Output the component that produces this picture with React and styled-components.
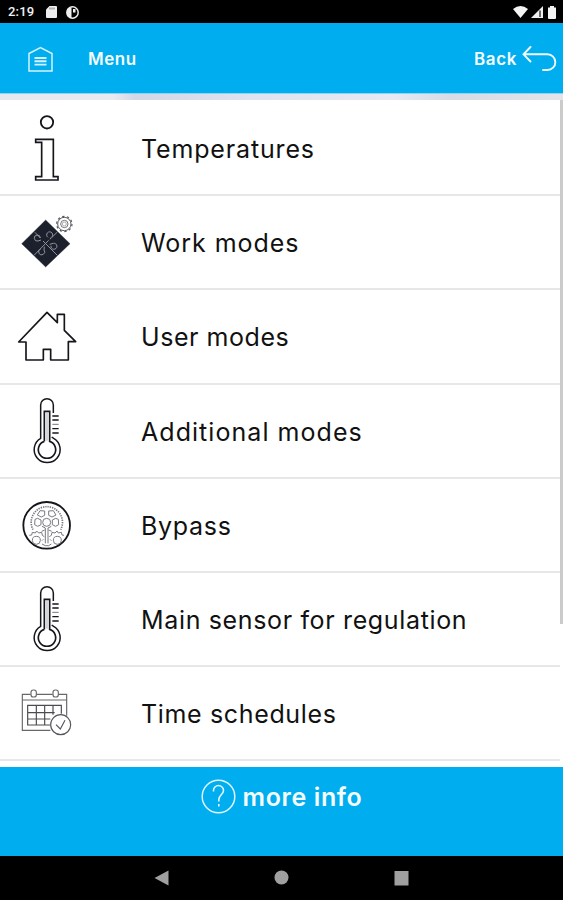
import styled, { createGlobalStyle } from 'styled-components';

const GlobalStyle = createGlobalStyle`
  * {
    box-sizing: border-box;
  }
  body {
    margin: 0;
    background: #000;
    overflow: hidden;
  }
`;

const Screen = styled.div`
  display: flex;
  flex-direction: column;
  width: 563px;
  height: 900px;
  background: #fff;
  font-family: Inter, 'Open Sans', sans-serif;
`;

const StatusBar = styled.div`
  display: flex;
  align-items: center;
  justify-content: space-between;
  height: 23px;
  padding: 1px 5px 0 8px;
  background: #000;
  color: #f2f2f2;
  font: 500 13px/22px Roboto, sans-serif;
`;

const StatusGroup = styled.div`
  display: flex;
  align-items: center;
  gap: ${(p) => p.$gap};
`;

const Time = styled.span`
  width: 26px;
  margin-right: 3px;
  letter-spacing: 0.2px;
`;

const Header = styled.header`
  display: flex;
  align-items: center;
  height: 70px;
  padding: 2px 6px 0 28px;
  background: #00adef;
  color: #f4fcff;
`;

const HeaderLabel = styled.span`
  font-size: 17px;
  font-weight: 600;
  line-height: 24px;
  letter-spacing: ${(p) => p.$tracking};
`;

const Title = styled(HeaderLabel)`
  margin-left: 35px;
  flex: 1;
`;

const BackButton = styled.div`
  display: flex;
  align-items: center;
  gap: 5px;
`;

const Shade = styled.div`
  height: 7px;
  border-top: 1px solid #8fd3ef;
  background: linear-gradient(90deg, #e6e8ef 0%, #e9eaf1 20%, #d3d7e6 24%, #dfe3ef 45%, #e6e9f3 70%, #d7dbe5 80%, #e2e4e9 100%);
`;

const Content = styled.main`
  display: flex;
  height: 667px;
  overflow: hidden;
`;

const List = styled.div`
  flex: 1;
  padding-top: 2px;
`;

const Scrollbar = styled.div`
  width: 3px;
  height: 524px;
  background: #cbcbcb;
`;

const Row = styled.div`
  display: flex;
  align-items: center;
  height: 94.2px;
  border-bottom: 2px solid #e7e7e8;
`;

const RowIcon = styled.svg`
  flex: none;
  width: 94px;
  height: 94px;
  margin-right: 47px;
  fill: none;
  stroke: #15161c;
  stroke-width: 4;
`;

const RowLabel = styled.span`
  padding-top: 2px;
  color: #111;
  font-size: 25px;
  line-height: 32px;
  white-space: nowrap;
  letter-spacing: ${(p) => p.$tracking};
`;

const Footer = styled.footer`
  display: flex;
  align-items: flex-start;
  justify-content: center;
  gap: 7px;
  height: 89px;
  padding-top: 12px;
  background: #00adef;
  color: #f4fcff;
`;

const FooterLabel = styled.span`
  font-size: 25px;
  font-weight: 600;
  line-height: 37px;
  letter-spacing: 0.6px;
`;

const NavBar = styled.nav`
  display: flex;
  align-items: center;
  justify-content: center;
  gap: 104px;
  height: 44px;
  background: #000;
`;

function InfoIcon() {
  return (
    <RowIcon viewBox="0 2 282 282">
      <circle cx="141" cy="66" r="18.5" strokeWidth="5.5" />
      <path d="M107 117H160V229H174V239H107V229H125V126H107Z" strokeWidth="5" />
    </RowIcon>
  );
}

function PuzzleIcon() {
  return (
    <RowIcon viewBox="0 1 282 282">
      <path d="M137 76L210 147L137 217L65 147Z" fill="#1c202c" stroke="#1c202c" strokeWidth="1" />
      <g stroke="#989ba3" strokeWidth="2.8">
        <path d="M105 113L121 130M129 139L172 182M172 112L155 129M146 137L102 182" />
        <path d="M121 130a9 9 0 1 0-7 9l9-3M144 128a9 9 0 1 1 10 0l-4 6M153 153a9 9 0 1 0 7-7l-11 3M122 163a9 9 0 1 0 10 3l1-10" />
      </g>
      <g stroke="#555861" strokeWidth="3">
        <circle cx="193" cy="88" r="20" />
        <circle cx="193" cy="88" r="23" strokeWidth="3.5" strokeDasharray="7 7.45" />
        <circle cx="193" cy="88" r="11" stroke="#777" />
        <circle cx="193" cy="88" r="6" stroke="#888" strokeWidth="2" />
      </g>
    </RowIcon>
  );
}

function HouseIcon() {
  return (
    <RowIcon viewBox="0 -3 282 282">
      <path
        d="M141 67L172 98V73H193V121L227 155H205V210H152V178H130V210H78V156H56Z"
        strokeWidth="5"
        strokeLinejoin="round"
      />
    </RowIcon>
  );
}

function ThermometerIcon() {
  return (
    <RowIcon viewBox="0 -4 282 282">
      <path d="M160 83V59a19 19 0 0 0-38 0V159A39 39 0 1 0 161 159L155 155" strokeWidth="4.5" />
      <path d="M133 168V78H149V168A26 26 0 1 1 133 168" strokeWidth="5" />
      <path d="M141 80V166" stroke="#aaacb8" strokeWidth="3" />
      <path d="M157 92H176M157 104H176M157 130H176M157 143H176" strokeWidth="4" />
      <path d="M157 117H176" stroke="#777" strokeWidth="3" />
    </RowIcon>
  );
}

function BypassIcon() {
  return (
    <RowIcon viewBox="0 -8 282 282">
      <circle cx="140" cy="134" r="70" strokeWidth="5.5" />
      <g stroke="#777a80" strokeWidth="3">
        <path d="M99 147A47 47 0 1 1 182 147" strokeWidth="5" strokeDasharray="4 3" />
        <circle cx="140" cy="125" r="12" />
        <path d="M120 90L112 103L124 109L134 104V91ZM146 91V104L156 109L168 103L160 90Z" />
        <path d="M105 116L113 113L123 118V132L113 137L104 132ZM175 116L167 113L157 118V132L167 137L176 132Z" />
        <path d="M126 137L136 142V188M154 137L144 142V188M125 152L134 148M155 152L146 148" />
        <circle cx="109" cy="179" r="12" />
        <circle cx="172" cy="179" r="12" />
        <path d="M88 164L95 163L97 155L106 157L110 151L116 157L125 155L127 164L133 168M192 164L186 163L184 155L175 157L171 151L165 157L156 155L154 164L148 168" />
        <path d="M126 180L130 176M150 176L154 180M126 190L136 195H146L154 190" />
      </g>
    </RowIcon>
  );
}

function CalendarIcon() {
  return (
    <RowIcon viewBox="0 -10 282 282">
      <g stroke="#66686d" strokeWidth="3.5">
        <path d="M92 75H67V183H151M109 75H158M175 75H200V139M67 92H200" />
        <rect x="93" y="62" width="16" height="21" rx="7" />
        <rect x="159" y="62" width="16" height="21" rx="7" />
        <path d="M151 167H83V108H184V133M83 130H164M83 149H151M109 108V167M134 108V167M159 108V136" stroke="#4a4c50" />
      </g>
      <circle cx="182" cy="166" r="30" fill="#fff" stroke="#55575c" strokeWidth="3.5" />
      <path d="M168 166L181 179L195 153" stroke="#55575c" strokeWidth="3.5" />
    </RowIcon>
  );
}

const items = [
  { label: 'Temperatures', Icon: InfoIcon, tracking: '0.85px' },
  { label: 'Work modes', Icon: PuzzleIcon, tracking: '0.95px' },
  { label: 'User modes', Icon: HouseIcon, tracking: '0.55px' },
  { label: 'Additional modes', Icon: ThermometerIcon, tracking: '1.05px' },
  { label: 'Bypass', Icon: BypassIcon, tracking: '0.7px' },
  { label: 'Main sensor for regulation', Icon: ThermometerIcon, tracking: '0.65px' },
  { label: 'Time schedules', Icon: CalendarIcon, tracking: '0.65px' },
];

export default function App() {
  return (
    <Screen>
      <GlobalStyle />
      <StatusBar>
        <StatusGroup $gap="9px">
          <Time>2:19</Time>
          <svg width="11" height="12" viewBox="0 0 11 12">
            <path d="M3.5 0H10Q11 0 11 1V11Q11 12 10 12H1Q0 12 0 11V3.5Z" fill="#eee" />
            <path d="M4 1.5V3.5M6 1.5V3.5M8 1.5V3.5" stroke="#555" strokeWidth=".8" />
          </svg>
          <svg width="13" height="13" viewBox="0 0 13 13">
            <circle cx="6.5" cy="6.5" r="5.7" fill="none" stroke="#eee" strokeWidth="1.5" />
            <path d="M1 3L5.500 1V12L1 10ZM7 3H9.500V6.500H7Z" fill="#eee" />
          </svg>
        </StatusGroup>
        <StatusGroup $gap="3px">
          <svg width="15" height="12" viewBox="0 0 15 12">
            <path d="M0 3Q7.500 -3 15 3L7.500 12Z" fill="#f4f4f4" />
          </svg>
          <svg width="12" height="12" viewBox="0 0 12 12">
            <path d="M0 12L12 0V12Z" fill="#eee" />
            <path d="M9 4.500V11" stroke="#333" strokeWidth="1.400" />
          </svg>
          <svg width="12" height="13" viewBox="0 0 12 13">
            <path d="M4 0H8V1.500H10V12Q10 13 9 13H3Q2 13 2 12V1.500H4Z" fill="#f4f4f4" />
          </svg>
        </StatusGroup>
      </StatusBar>
      <Header>
        <svg width="25" height="26" viewBox="0 0 25 26" fill="none" stroke="#d5f3ff">
          <path d="M1 7.500L12.500 1.500L24 7.500V25H1Z" strokeWidth="1.500" />
          <path d="M6.500 12H18.500M6.500 15.300H18.500M6.500 18.600H18.500" strokeWidth="1.900" />
        </svg>
        <Title $tracking="0.5px">Menu</Title>
        <BackButton>
          <HeaderLabel $tracking="0.6px">Back</HeaderLabel>
          <svg width="35" height="26" viewBox="0 0 35 26" fill="none" stroke="#f0fbff" strokeWidth="1.900">
            <path d="M8.500 1L1.500 8.300L8.500 15.500M2 8.300H25.500A7.800 7.800 0 0 1 25.500 24H21" strokeLinecap="round" />
          </svg>
        </BackButton>
      </Header>
      <Shade />
      <Content>
        <List>
          {items.map(({ label, Icon, tracking }) => (
            <Row key={label}>
              <Icon />
              <RowLabel $tracking={tracking}>{label}</RowLabel>
            </Row>
          ))}
        </List>
        <Scrollbar />
      </Content>
      <Footer>
        <svg width="35" height="35" viewBox="0 0 35 35" fill="none" stroke="#e2f7ff">
          <circle cx="17.500" cy="17.500" r="16.300" strokeWidth="1.500" />
          <path d="M12.500 12.500V11.500A5 5 0 0 1 22.500 11.500C22.500 15.500 17.800 16 17.800 20.500V22.500M17.800 25V27.500" strokeWidth="1.600" />
        </svg>
        <FooterLabel>more info</FooterLabel>
      </Footer>
      <NavBar>
        <svg width="16" height="16" viewBox="0 0 16 16">
          <path d="M.5 8L14.500 .5V15.500Z" fill="#a0a0a0" />
        </svg>
        <svg width="16" height="16" viewBox="0 0 16 16">
          <circle cx="7.500" cy="7.500" r="7" fill="#a0a0a0" />
        </svg>
        <svg width="16" height="16" viewBox="0 0 16 16">
          <rect x=".5" y="1" width="14" height="14.500" fill="#a0a0a0" />
        </svg>
      </NavBar>
    </Screen>
  );
}
